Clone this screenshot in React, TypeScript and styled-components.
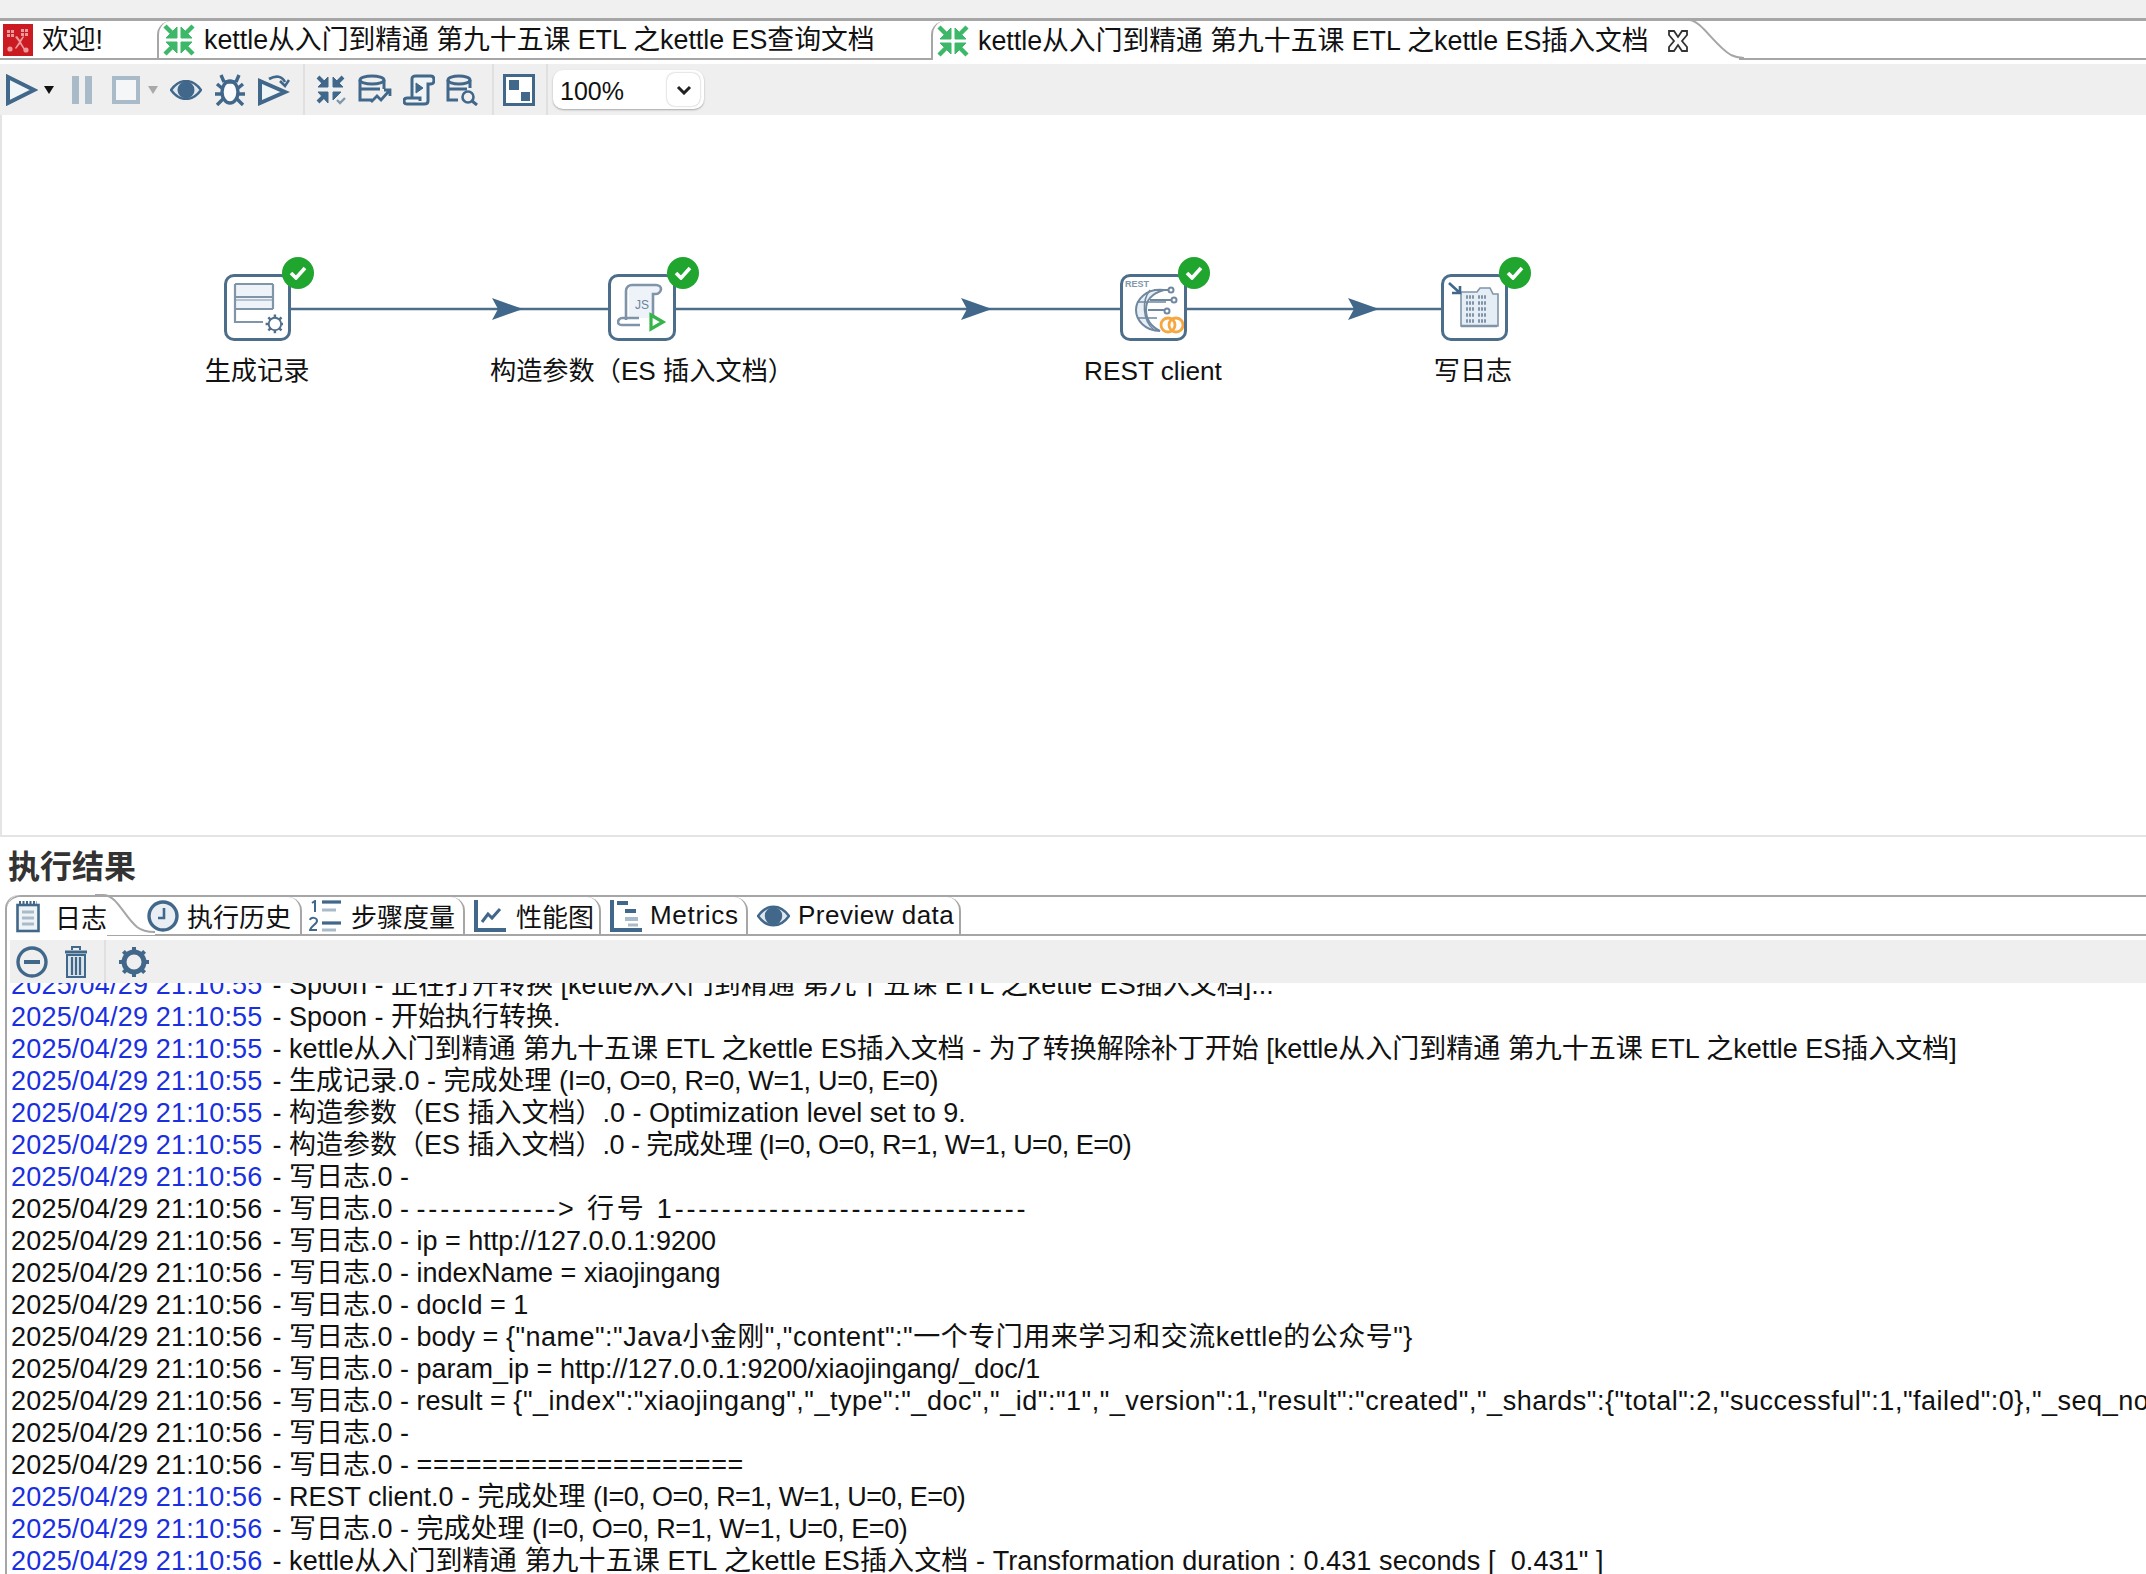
import React from "react";
import styled, { createGlobalStyle } from "styled-components";

const BLUE = "#41688a";
const PALE = "#a9bbc9";
const LINE = "#a6a6a6";

const GlobalStyle = createGlobalStyle`
  html, body {
    margin: 0;
    padding: 0;
    background: #fff;
    overflow: hidden;
  }
  * {
    box-sizing: border-box;
  }
  svg {
    flex: none;
  }
`;

type Log = { t: string; m: string; tail?: string; track?: number; blue?: boolean };

const logLines: Log[] = [
  { t: "2025/04/29 21:10:55", m: " - Spoon - 正在打开转换 [kettle从入门到精通 第九十五课 ETL 之kettle ES插入文档]...", blue: true },
  { t: "2025/04/29 21:10:55", m: " - Spoon - 开始执行转换.", blue: true },
  { t: "2025/04/29 21:10:55", m: " - kettle从入门到精通 第九十五课 ETL 之kettle ES插入文档 - 为了转换解除补丁开始 [kettle从入门到精通 第九十五课 ETL 之kettle ES插入文档]", blue: true },
  { t: "2025/04/29 21:10:55", m: " - 生成记录.0 - 完成处理 ", tail: "(I=0, O=0, R=0, W=1, U=0, E=0)", track: -0.32, blue: true },
  { t: "2025/04/29 21:10:55", m: " - 构造参数（ES 插入文档）.0 - Optimization level set to 9.", blue: true },
  { t: "2025/04/29 21:10:55", m: " - 构造参数（ES 插入文档）", tail: ".0 - 完成处理 (I=0, O=0, R=1, W=1, U=0, E=0)", track: -0.55, blue: true },
  { t: "2025/04/29 21:10:56", m: " - 写日志.0 - ", blue: true },
  { t: "2025/04/29 21:10:56", m: " - 写日志.0 - ", tail: "------------> 行号 1------------------------------", track: 2.8 },
  { t: "2025/04/29 21:10:56", m: " - 写日志.0 - ip = http://127.0.0.1:9200" },
  { t: "2025/04/29 21:10:56", m: " - 写日志.0 - indexName = xiaojingang" },
  { t: "2025/04/29 21:10:56", m: " - 写日志.0 - docId = 1" },
  { t: "2025/04/29 21:10:56", m: " - 写日志.0 - body = ", tail: '{"name":"Java小金刚","content":"一个专门用来学习和交流kettle的公众号"}', track: 0.5 },
  { t: "2025/04/29 21:10:56", m: " - 写日志.0 - param_ip = http://127.0.0.1:9200/xiaojingang/_doc/1" },
  { t: "2025/04/29 21:10:56", m: " - 写日志.0 - result = ", tail: '{"_index":"xiaojingang","_type":"_doc","_id":"1","_version":1,"result":"created","_shards":{"total":2,"successful":1,"failed":0},"_seq_no":0,"_primary_term":1}', track: 0.52 },
  { t: "2025/04/29 21:10:56", m: " - 写日志.0 - " },
  { t: "2025/04/29 21:10:56", m: " - 写日志.0 - ", tail: "====================", track: 0.6 },
  { t: "2025/04/29 21:10:56", m: " - REST client.0 - 完成处理 ", tail: "(I=0, O=0, R=1, W=1, U=0, E=0)", track: -0.55, blue: true },
  { t: "2025/04/29 21:10:56", m: " - 写日志.0 - 完成处理 ", tail: "(I=0, O=0, R=1, W=1, U=0, E=0)", track: -0.45, blue: true },
  { t: "2025/04/29 21:10:56", m: " - ", tail: 'kettle从入门到精通 第九十五课 ETL 之kettle ES插入文档 - Transformation duration : 0.431 seconds [  0.431" ]', track: 0.1, blue: true },
];

const Icon = ({ size = 32, h, children }: { size?: number; h?: number; children: React.ReactNode }) => (
  <svg width={size} height={h ?? size} viewBox={`0 0 ${size} ${h ?? size}`} fill="none" stroke={BLUE} strokeWidth={3}>
    {children}
  </svg>
);

const Squeeze = ({ color }: { color: string }) => (
  <g stroke={color} strokeWidth={4.4} fill={color}>
    <path d="M2 2l9 9M30 2l-9 9M2 30l9-9M30 30l-9-9" fill="none" />
    <path d="M14 3v11H3zM18 3v11h11zM14 29V18H3zM18 29V18h11z" strokeWidth={1} />
  </g>
);

const KettleLogo = () => (
  <svg width={30} height={32} viewBox="0 0 30 32">
    <rect width={30} height={32} fill="#cb1a21" />
    <g fill="#eb9a9c">
      <path d="M4 6h3v3H4zM8 6h3v3H8zM4 10h3v3H4zM8 10h3v3H8zM18 5h3v3h-3zM22 5h3v3h-3zM18 9h3v3h-3zM22 9h3v3h-3z" />
      <path d="M12 13l2-1 3 4 3-4 1 1-3 5 4 7-1 1-4-6-4 5-1-1 4-6z" />
      <circle cx={7} cy={25} r={2.6} />
      <circle cx={23} cy={26} r={2.6} />
    </g>
  </svg>
);

const CloseGlyph = () => (
  <svg width={24} height={24} viewBox="0 0 24 24" fill="#fff" stroke="#333" strokeWidth={1.8}>
    <path d="M3 2h5l4 6 4-6h5v4l-5 6 5 6v4h-5l-4-6-4 6H3v-4l5-6-5-6z" />
  </svg>
);

const PlayIcon = () => (
  <Icon>
    <path d="M2 3l26 13L2 29z" strokeWidth={4} fill="#f0f5f8" />
  </Icon>
);

const PauseIcon = () => (
  <svg width={20} height={28} viewBox="0 0 20 28">
    <path d="M0 0h7v28H0zM13 0h7v28h-7z" fill={PALE} />
  </svg>
);

const StopIcon = () => (
  <svg width={28} height={28} viewBox="0 0 28 28">
    <rect x={2} y={2} width={24} height={24} fill="#f4f6f8" stroke={PALE} strokeWidth={4} />
  </svg>
);

const EyeIcon = ({ w = 32, h = 20 }: { w?: number; h?: number }) => (
  <svg width={w} height={h} viewBox="0 0 32 20">
    <path d="M1 10C6 3 11 1 16 1s10 2 15 9c-5 7-10 9-15 9S6 17 1 10z" fill="#dfe7ee" stroke={BLUE} strokeWidth={2.4} />
    <circle cx={16} cy={10} r={8.5} fill={BLUE} />
  </svg>
);

const BugIcon = () => (
  <Icon size={32}>
    <ellipse cx={16} cy={18} rx={8} ry={11} fill="#fbfcfd" strokeWidth={3.4} />
    <path d="M10 8L7 1M22 8l3-7M9 15L3 10M23 15l6-5M8 20H1M24 20h7M9 25l-6 6M23 25l6 6M10 8h12" strokeWidth={3.4} />
  </Icon>
);

const DebugRunIcon = () => (
  <Icon>
    <path d="M2 7l25 11L2 29z" strokeWidth={4} fill="#f0f5f8" />
    <path d="M11 5c7-4 13-3 16 3" strokeWidth={2.6} />
    <path d="M22 7l5 5 4-6" strokeWidth={2.6} />
  </Icon>
);

const CheckSqueezeIcon = () => (
  <Icon>
    <path d="M3 3l7 7M28 3l-7 7M3 28l7-7" strokeWidth={4} />
    <path d="M13 3v10H3zM18 3v10h10zM13 29V18H3zM18 18h8l-8 8z" fill={BLUE} strokeWidth={1} />
    <path d="M22 26l3 3 5-5" strokeWidth={2.4} stroke="#7f98ac" />
  </Icon>
);

const DbImpactIcon = () => (
  <svg width={34} height={32} viewBox="0 0 34 32" fill="none" stroke={BLUE} strokeWidth={3}>
    <ellipse cx={14} cy={6} rx={12} ry={4} />
    <path d="M2 6v20h12M26 6v9M2 15h20" />
    <path d="M13 28l6-6 4 4 8-9M26 16h6v6" strokeWidth={2.8} />
  </svg>
);

const ScriptIcon = () => (
  <Icon>
    <path d="M9 24V5c0-3 2-3 4-3h15c2 0 3 2 3 4s-1 4-3 4h-3v17c0 2-2 3-4 3H4c-2 0-3-1-3-3s1-3 3-3h13v3" fill="#f0f4f7" />
    <path d="M13 9l7 5-7 5z" fill={BLUE} strokeWidth={1} />
  </Icon>
);

const DbSearchIcon = () => (
  <svg width={33} height={32} viewBox="0 0 33 32" fill="none" stroke={BLUE} strokeWidth={3}>
    <ellipse cx={13} cy={6} rx={11} ry={4} />
    <path d="M2 6v20h10M24 6v8M2 15h19" />
    <circle cx={22} cy={23} r={5.5} strokeWidth={2.6} />
    <path d="M26 27l5 4" strokeWidth={3} />
  </svg>
);

const MapIcon = () => (
  <svg width={32} height={32} viewBox="0 0 32 32">
    <rect x={1.5} y={1.5} width={29} height={29} fill="#fff" stroke={BLUE} strokeWidth={3} />
    <rect x={6} y={6} width={10} height={10} fill={BLUE} />
    <rect x={18} y={18} width={9} height={9} fill={BLUE} />
  </svg>
);

const NotesIcon = () => (
  <svg width={24} height={32} viewBox="0 0 24 32" fill="none" stroke={BLUE} strokeWidth={2.6}>
    <rect x={1.5} y={4} width={21} height={26} fill="#eef3f6" />
    <path d="M3 2h18" strokeWidth={4} strokeDasharray="2 1.5" />
    <path d="M6 11h12M6 17h12M6 23h12" stroke={PALE} strokeWidth={3} />
  </svg>
);

const ClockIcon = () => (
  <svg width={32} height={32} viewBox="0 0 32 32" fill="#e8eef3" stroke={BLUE} strokeWidth={3.4}>
    <circle cx={16} cy={16} r={14} />
    <path d="M17 8v10h-6" fill="none" strokeWidth={2.6} />
  </svg>
);

const StepsIcon = () => (
  <svg width={33} height={32} viewBox="0 0 33 32" fill="none" stroke={BLUE}>
    <path d="M3 3l3-2v11" strokeWidth={2} />
    <path d="M1 20c1-3 7-3 7 1 0 3-6 5-7 9h7" strokeWidth={2} />
    <path d="M13 2h19M13 10h14M13 23h19M13 30h14" strokeWidth={3} stroke={PALE} />
    <path d="M13 2h19M13 23h19" strokeWidth={3} />
  </svg>
);

const ChartIcon = () => (
  <svg width={32} height={32} viewBox="0 0 32 32" fill="none" stroke={BLUE}>
    <path d="M2 0v30h30" strokeWidth={4} />
    <path d="M8 22l6-8 4 4 8-9" strokeWidth={3} />
  </svg>
);

const GanttIcon = () => (
  <svg width={32} height={32} viewBox="0 0 32 32" fill="none" stroke={BLUE}>
    <path d="M2 0v30h30" strokeWidth={4} />
    <path d="M7 3h11M15 11h11" strokeWidth={4} />
    <path d="M15 19h13" strokeWidth={4} stroke={PALE} />
    <path d="M18 25h10" strokeWidth={3} stroke={PALE} />
  </svg>
);

const MinusCircleIcon = () => (
  <svg width={32} height={32} viewBox="0 0 32 32" fill="none" stroke={BLUE} strokeWidth={3.4}>
    <circle cx={16} cy={16} r={14} />
    <path d="M8 16h16" strokeWidth={4} />
  </svg>
);

const TrashIcon = () => (
  <svg width={24} height={32} viewBox="0 0 24 32" fill="none" stroke={BLUE}>
    <path d="M1 6h22" strokeWidth={3} />
    <path d="M8 4V1h8v3" strokeWidth={2} />
    <path d="M3 9h18v22H3z" fill="#dce5ec" strokeWidth={2} />
    <path d="M8 11v18M12 11v18M16 11v18" strokeWidth={2.2} />
  </svg>
);

const GearIcon = ({ size = 32, color = BLUE, sw = 5 }: { size?: number; color?: string; sw?: number }) => (
  <svg width={size} height={size} viewBox="0 0 32 32" fill="none" stroke={color}>
    <circle cx={16} cy={16} r={10} strokeWidth={sw} />
    <path d="M16 1v5M16 26v5M1 16h5M26 16h5M5.4 5.4l3.6 3.6M23 23l3.6 3.6M26.6 5.4L23 9M9 23l-3.6 3.6" strokeWidth={4} />
  </svg>
);

const GenerateRowsIcon = () => (
  <svg width={50} height={52} viewBox="0 0 50 52" fill="none" stroke="#8195a8" strokeWidth={2.2}>
    <path d="M2 2h38v25H2z" fill="#edf3f8" stroke="none" />
    <path d="M2 2h38M2 15h38" />
    <path d="M2 18h38" stroke="#b5c3cf" />
    <path d="M40 2v25M2 2v38h28" />
    <path d="M2 27h38" />
    <g transform="translate(32 32) scale(.62)">
      <GearIcon size={32} color="#4f6f8b" sw={3} />
    </g>
  </svg>
);

const JsScriptIcon = () => (
  <svg width={50} height={52} viewBox="0 0 50 52" fill="none" stroke="#7f94a8" strokeWidth={2.6}>
    <path d="M12 38V8c0-3 2-5 5-5h22c3 0 4 2 4 4s-1 4-4 4h-4v25H12z" fill="#edf3f8" stroke="none" />
    <path d="M9 38V9c0-4 3-6 6-6h24c3 0 5 2 5 4s-2 5-5 5h-3v23" />
    <path d="M23 43H5c-2 0-4-1-4-3s2-4 4-4h17" />
    <text x={18} y={27} fill="#6d8399" stroke="none" fontSize={12} fontFamily="Liberation Sans, sans-serif">JS</text>
    <path d="M34 33l12 7-12 7z" stroke="#34b44a" strokeWidth={3.2} fill="#fff" />
  </svg>
);

const RestIcon = () => (
  <svg width={60} height={60} viewBox="0 0 60 60" fill="none" stroke="#6f88a0" strokeWidth={2}>
    <text x={1} y={9} fill="#8296a9" stroke="none" fontSize={9} fontWeight={700} fontFamily="Liberation Sans, sans-serif">REST</text>
    <path d="M40 12C22 10 12 22 12 32s9 21 24 21c-10-5-14-12-14-21s4-16 18-20z" fill="#e7eef4" />
    <path d="M13 24h29M13 40h20M26 12c-8 10-8 30 4 40" strokeWidth={1.6} />
    <path d="M30 12h16M26 22h22M24 32h16" />
    <circle cx={47} cy={12} r={2.5} fill="#fff" />
    <circle cx={50} cy={22} r={2.5} fill="#fff" />
    <circle cx={43} cy={33} r={2.5} fill="#fff" />
    <circle cx={44} cy={47} r={7} stroke="#f5a742" strokeWidth={2.8} />
    <circle cx={52} cy={47} r={7} stroke="#f5a742" strokeWidth={2.8} />
  </svg>
);

const WriteLogIcon = () => (
  <svg width={54} height={52} viewBox="0 0 54 52" fill="none" stroke="#7f94a8">
    <path d="M13 10h16l3-4h10l3 6h5v32H13z" fill="#e6eef5" strokeWidth={1.6} />
    <path d="M13 44h36" strokeWidth={2.6} />
    <path d="M18 15h8M30 15h8M18 21h8M30 21h8M18 27h8M30 27h8M18 33h8M30 33h8M18 39h8M30 39h8" strokeWidth={3.4} strokeDasharray="2 1" />
    <path d="M1 1l11 10M12 4v7H4" stroke={BLUE} strokeWidth={2.6} />
  </svg>
);

const Page = styled.div`
  width: 2146px;
  height: 1574px;
  display: flex;
  flex-direction: column;
  overflow: hidden;
  font-family: "Liberation Sans", "Noto Sans CJK SC", sans-serif;
  color: #111;
`;

const TopStrip = styled.div`
  height: 18px;
  flex: none;
  background: #f0f0f0;
`;

const EditorTabs = styled.div`
  height: 42px;
  flex: none;
  display: flex;
  background: #fff;
  border-top: 3px solid ${LINE};
  border-bottom: 2px solid ${LINE};
`;

const EditorTab = styled.div<{ $w: number; $active?: boolean; $plain?: boolean }>`
  position: relative;
  width: ${(p) => p.$w}px;
  flex: none;
  display: flex;
  align-items: center;
  gap: 9px;
  padding-left: ${(p) => (p.$plain ? 3 : 4)}px;
  font-size: 26.8px;
  white-space: nowrap;
  background: #fff;
  border-left: ${(p) => (p.$plain ? "0" : `2px solid ${LINE}`)};
  border-top-left-radius: 14px;
  margin-bottom: ${(p) => (p.$active ? "-2px" : "0")};
`;

const TabTitle = styled.span`
  line-height: 36px;
`;

const TabClose = styled.span`
  display: flex;
  flex: none;
  margin-left: 8px;
`;

const CurveEnd = styled.svg<{ $right: number }>`
  position: absolute;
  top: -3px;
  right: ${(p) => p.$right}px;
  z-index: 1;
`;

const Gap = styled.div`
  height: 4px;
  flex: none;
  background: #fff;
`;

const Toolbar = styled.div`
  height: 51px;
  flex: none;
  display: flex;
  align-items: center;
  padding-left: 6px;
  background: #efefef;
`;

const Slot = styled.span<{ $ml?: number }>`
  display: flex;
  flex: none;
  margin-left: ${(p) => p.$ml ?? 0}px;
`;

const Caret = styled.span<{ $pale?: boolean }>`
  flex: none;
  width: 0;
  height: 0;
  border-left: 5px solid transparent;
  border-right: 5px solid transparent;
  border-top: 8px solid ${(p) => (p.$pale ? "#a9a9a9" : "#111")};
`;

const Divider = styled.span<{ $ml: number }>`
  flex: none;
  align-self: stretch;
  width: 2px;
  margin-left: ${(p) => p.$ml}px;
  background: #e0e0e0;
`;

const ZoomSelect = styled.div`
  width: 151px;
  height: 39px;
  margin-left: 5px;
  flex: none;
  display: flex;
  align-items: center;
  justify-content: space-between;
  padding: 0 4px 0 7px;
  background: #fff;
  border-radius: 10px;
  box-shadow: 0 1px 2px rgba(0, 0, 0, 0.3);
  font-size: 25px;
`;

const ZoomValue = styled.span`
  padding-top: 4px;
`;

const ZoomButton = styled.span`
  width: 33px;
  height: 33px;
  display: flex;
  align-items: center;
  justify-content: center;
  border-radius: 8px;
  box-shadow: 0 0 2px rgba(0, 0, 0, 0.35);
`;

const Canvas = styled.div`
  position: relative;
  height: 722px;
  flex: none;
  background: #fff;
  box-shadow: inset 2px -2px 0 #e4e4e4;
`;

const Hops = styled.svg`
  position: absolute;
  left: 0;
  top: 0;
`;

const StepNode = styled.div<{ $x: number; $w: number }>`
  position: absolute;
  left: ${(p) => p.$x}px;
  top: 159px;
  width: ${(p) => p.$w}px;
  height: 67px;
  display: flex;
  align-items: center;
  justify-content: center;
  background: #fff;
  border: 3px solid #4d6e8a;
  border-radius: 10px;
`;

const Badge = styled.span`
  position: absolute;
  top: -20px;
  right: -26px;
  width: 32px;
  height: 32px;
  display: flex;
  align-items: center;
  justify-content: center;
  border-radius: 50%;
  background: #20a52f;
`;

const StepLabel = styled.div<{ $cx: number }>`
  position: absolute;
  left: ${(p) => p.$cx}px;
  top: 239px;
  transform: translateX(-50%);
  font-size: 26.2px;
  line-height: 34px;
  white-space: nowrap;
`;

const SectionTitle = styled.div`
  height: 58px;
  flex: none;
  display: flex;
  align-items: center;
  padding: 0 0 4px 8px;
  font-size: 32px;
  font-weight: 700;
  color: #333;
`;

const ResultPanel = styled.div`
  flex: 1;
  min-height: 0;
  display: flex;
  flex-direction: column;
  margin-left: 5px;
  border-left: 2px solid ${LINE};
  border-top-left-radius: 14px;
`;

const ResultTabs = styled.div`
  height: 41px;
  flex: none;
  display: flex;
  border-top: 2px solid ${LINE};
  border-bottom: 2px solid ${LINE};
  border-top-left-radius: 14px;
`;

const ResultTab = styled.div<{ $w: number; $active?: boolean; $pad?: number; $gap?: number; $track?: number }>`
  position: relative;
  width: ${(p) => p.$w}px;
  flex: none;
  display: flex;
  align-items: center;
  gap: ${(p) => p.$gap ?? 9}px;
  padding-left: ${(p) => p.$pad ?? 8}px;
  font-size: 26px;
  letter-spacing: ${(p) => p.$track ?? 0}px;
  white-space: nowrap;
  border-right: ${(p) => (p.$active ? "0" : `2px solid ${LINE}`)};
  border-top-right-radius: ${(p) => (p.$active ? 0 : 14)}px;
  margin-bottom: ${(p) => (p.$active ? "-2px" : "0")};
  background: ${(p) => (p.$active ? "#fff" : "transparent")};
  border-top-left-radius: ${(p) => (p.$active ? 14 : 0)}px;
`;

const LogToolbar = styled.div`
  height: 43px;
  flex: none;
  margin: 4px 0 0 3px;
  display: flex;
  align-items: center;
  padding-left: 6px;
  background: #efefef;
`;

const LogPane = styled.div`
  flex: 1;
  min-height: 0;
  overflow: hidden;
  padding-left: 4px;
`;

const LogScroll = styled.div`
  margin-top: -14px;
`;

const LogLine = styled.div`
  height: 32px;
  line-height: 32px;
  font-size: 27px;
  white-space: pre;
  color: #111;
`;

const Stamp = styled.span<{ $blue?: boolean }>`
  margin-right: 2.5px;
  letter-spacing: 0.2px;
  color: ${(p) => (p.$blue ? "#1a2fe0" : "inherit")};
`;

const Tail = styled.span<{ $track?: number }>`
  letter-spacing: ${(p) => p.$track ?? 0}px;
`;

const hopArrows = [492, 961, 1348];

const steps = [
  { name: "生成记录", x: 224, w: 67, cx: 257, icon: <GenerateRowsIcon /> },
  { name: "构造参数（ES 插入文档）", x: 608, w: 68, cx: 642, icon: <JsScriptIcon /> },
  { name: "REST client", x: 1120, w: 67, cx: 1153, icon: <RestIcon /> },
  { name: "写日志", x: 1441, w: 67, cx: 1473, icon: <WriteLogIcon /> },
];

const resultTabs = [
  { w: 163, label: "步骤度量", icon: <StepsIcon />, gap: 9, pad: 7, track: 0 },
  { w: 136, label: "性能图", icon: <ChartIcon />, gap: 10, pad: 9, track: 0 },
  { w: 147, label: "Metrics", icon: <GanttIcon />, gap: 8, pad: 9, track: 0.7 },
  { w: 213, label: "Preview data", icon: <EyeIcon w={33} h={22} />, gap: 8, pad: 9, track: 0.5 },
];

export default function App() {
  return (
    <Page>
      <GlobalStyle />
      <TopStrip />
      <EditorTabs>
        <EditorTab $w={157} $plain>
          <KettleLogo />
          <TabTitle>欢迎!</TabTitle>
        </EditorTab>
        <EditorTab $w={774}>
          <Icon size={32}>
            <Squeeze color="#3cb868" />
          </Icon>
          <TabTitle>kettle从入门到精通 第九十五课 ETL 之kettle ES查询文档</TabTitle>
        </EditorTab>
        <EditorTab $w={754} $active>
          <Icon size={32}>
            <Squeeze color="#3cb868" />
          </Icon>
          <TabTitle>kettle从入门到精通 第九十五课 ETL 之kettle ES插入文档</TabTitle>
          <TabClose>
            <CloseGlyph />
          </TabClose>
          <CurveEnd $right={-59} width={59} height={42} viewBox="0 0 59 42">
            <path d="M0 39H54V42H0z" fill="#fff" />
            <path d="M0 2h4c12 0 26 26 42 35 4 2 7 3 13 3" fill="none" stroke={LINE} strokeWidth={2} />
          </CurveEnd>
        </EditorTab>
      </EditorTabs>
      <Gap />
      <Toolbar>
        <PlayIcon />
        <Slot $ml={6}>
          <Caret />
        </Slot>
        <Slot $ml={18}>
          <PauseIcon />
        </Slot>
        <Slot $ml={20}>
          <StopIcon />
        </Slot>
        <Slot $ml={8}>
          <Caret $pale />
        </Slot>
        <Slot $ml={12}>
          <EyeIcon />
        </Slot>
        <Slot $ml={12}>
          <BugIcon />
        </Slot>
        <Slot $ml={12}>
          <DebugRunIcon />
        </Slot>
        <Divider $ml={13} />
        <Slot $ml={10}>
          <CheckSqueezeIcon />
        </Slot>
        <Slot $ml={11}>
          <DbImpactIcon />
        </Slot>
        <Slot $ml={11}>
          <ScriptIcon />
        </Slot>
        <Slot $ml={11}>
          <DbSearchIcon />
        </Slot>
        <Divider $ml={13} />
        <Slot $ml={9}>
          <MapIcon />
        </Slot>
        <Divider $ml={11} />
        <ZoomSelect>
          <ZoomValue>100%</ZoomValue>
          <ZoomButton>
            <svg width={16} height={10} viewBox="0 0 16 10" fill="none" stroke="#222" strokeWidth={3}>
              <path d="M2 2l6 6 6-6" />
            </svg>
          </ZoomButton>
        </ZoomSelect>
      </Toolbar>
      <Canvas>
        <Hops width={2146} height={722}>
          <path d="M291 194H1120M1187 194H1441" stroke="#4d6e8a" strokeWidth={2.4} />
          {hopArrows.map((x) => (
            <path key={x} d={`M${x} 183l31 11-31 11 6-11z`} fill={BLUE} />
          ))}
        </Hops>
        {steps.map((s) => (
          <React.Fragment key={s.name}>
            <StepNode $x={s.x} $w={s.w}>
              {s.icon}
              <Badge>
                <svg width={18} height={14} viewBox="0 0 18 14" fill="none" stroke="#fff" strokeWidth={3.6}>
                  <path d="M2 7l5 5 9-10" />
                </svg>
              </Badge>
            </StepNode>
            <StepLabel $cx={s.cx}>{s.name}</StepLabel>
          </React.Fragment>
        ))}
      </Canvas>
      <SectionTitle>执行结果</SectionTitle>
      <ResultPanel>
        <ResultTabs>
          <ResultTab $w={100} $active $pad={9} $gap={15}>
            <NotesIcon />
            日志
            <CurveEnd $right={-48} width={60} height={41} viewBox="0 0 60 41">
              <path d="M0 36H60v5H0z" fill="#fff" />
              <path d="M0 1h8c14 0 20 20 34 32 5 4 10 5 18 5" fill="none" stroke={LINE} strokeWidth={2} />
            </CurveEnd>
          </ResultTab>
          <ResultTab $w={195} $pad={40} $gap={8}>
            <ClockIcon />
            执行历史
          </ResultTab>
          {resultTabs.map((t) => (
            <ResultTab key={t.label} $w={t.w} $pad={t.pad} $gap={t.gap} $track={t.track}>
              {t.icon}
              {t.label}
            </ResultTab>
          ))}
        </ResultTabs>
        <LogToolbar>
          <MinusCircleIcon />
          <Slot $ml={16}>
            <TrashIcon />
          </Slot>
          <Divider $ml={16} />
          <Slot $ml={12}>
            <GearIcon />
          </Slot>
        </LogToolbar>
        <LogPane>
          <LogScroll>
            {logLines.map((l, i) => (
              <LogLine key={i}>
                <Stamp $blue={l.blue}>{l.t}</Stamp>
                {l.m}
                {l.tail && <Tail $track={l.track}>{l.tail}</Tail>}
              </LogLine>
            ))}
          </LogScroll>
        </LogPane>
      </ResultPanel>
    </Page>
  );
}
